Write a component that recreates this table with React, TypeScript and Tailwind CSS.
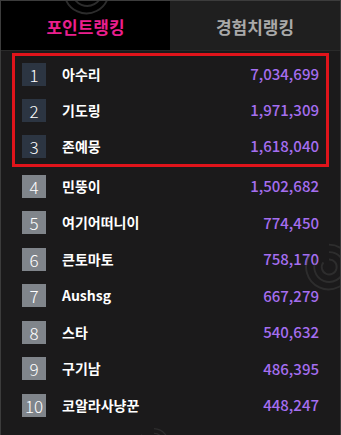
const ranks = [
  { name: '아수리', score: '7,034,699' },
  { name: '기도링', score: '1,971,309' },
  { name: '존예뭉', score: '1,618,040' },
  { name: '민뚱이', score: '1,502,682' },
  { name: '여기어떠니이', score: '774,450' },
  { name: '큰토마토', score: '758,170' },
  { name: 'Aushsg', score: '667,279' },
  { name: '스타', score: '540,632' },
  { name: '구기남', score: '486,395' },
  { name: '코알라사냥꾼', score: '448,247' },
]

function Row({ rank, name, score, top }: { rank: number; name: string; score: string; top: boolean }) {
  return (
    <div className={`flex items-center ${top ? 'h-9' : 'h-[36.5px]'}`}>
      <div
        className={`flex h-[23px] w-6 items-center justify-center text-[17px] font-light leading-none text-white ${
          top ? 'bg-[#2c3542]' : 'bg-[#80858b]'
        }`}
      >
        {rank}
      </div>
      <div className="ml-4 flex-1 text-[14px] font-bold text-white">{name}</div>
      <div className="text-[15px] font-medium text-[#a56ef0]">{score}</div>
    </div>
  )
}

function Swirl({ className }: { className: string }) {
  return (
    <svg className={className} viewBox="0 0 60 60" fill="none" stroke="#4a4a4a" strokeWidth={2}>
      <path d="M30 6a24 24 0 1 1-20 10" />
      <path d="M30 14a16 16 0 1 1-13 7" />
      <path d="M30 22a8 8 0 1 1-6 3" />
    </svg>
  )
}

export default function App() {
  return (
    <div
      className="relative h-[435px] w-[341px] overflow-hidden border-l border-r border-t border-[#3c3c3c] bg-[#1b1a1b]"
      style={{ fontFamily: '"Noto Sans CJK KR", "Noto Sans", sans-serif' }}
    >
      <div className="flex h-[50px] border-b border-[#2a2a2a]">
        <div className="flex w-[169px] items-center justify-center bg-black pt-[3px] text-[17px] font-bold text-[#ea1f8e]">
          포인트랭킹
        </div>
        <div className="flex flex-1 items-center justify-center bg-[#1f1f1f] pt-[3px] text-[17px] font-bold text-[#a9a9a9]">
          경험치랭킹
        </div>
      </div>
      <div className="px-[11px] pt-[2px]">
        <div className="border-[3px] border-[#e0141b] px-[7px]">
          {ranks.slice(0, 3).map((r, i) => (
            <Row key={i} rank={i + 1} name={r.name} score={r.score} top />
          ))}
        </div>
        <div className="px-[10px] pt-[1px]">
          {ranks.slice(3).map((r, i) => (
            <Row key={i} rank={i + 4} name={r.name} score={r.score} top={false} />
          ))}
        </div>
      </div>
      <Swirl className="pointer-events-none absolute left-[58px] top-[-38px] h-[56px] w-[56px] opacity-60" />
      <Swirl className="pointer-events-none absolute left-[300px] top-[238px] h-[56px] w-[56px] opacity-40" />
      <Swirl className="pointer-events-none absolute left-[135px] top-[424px] h-[36px] w-[36px] opacity-40" />
    </div>
  )
}
